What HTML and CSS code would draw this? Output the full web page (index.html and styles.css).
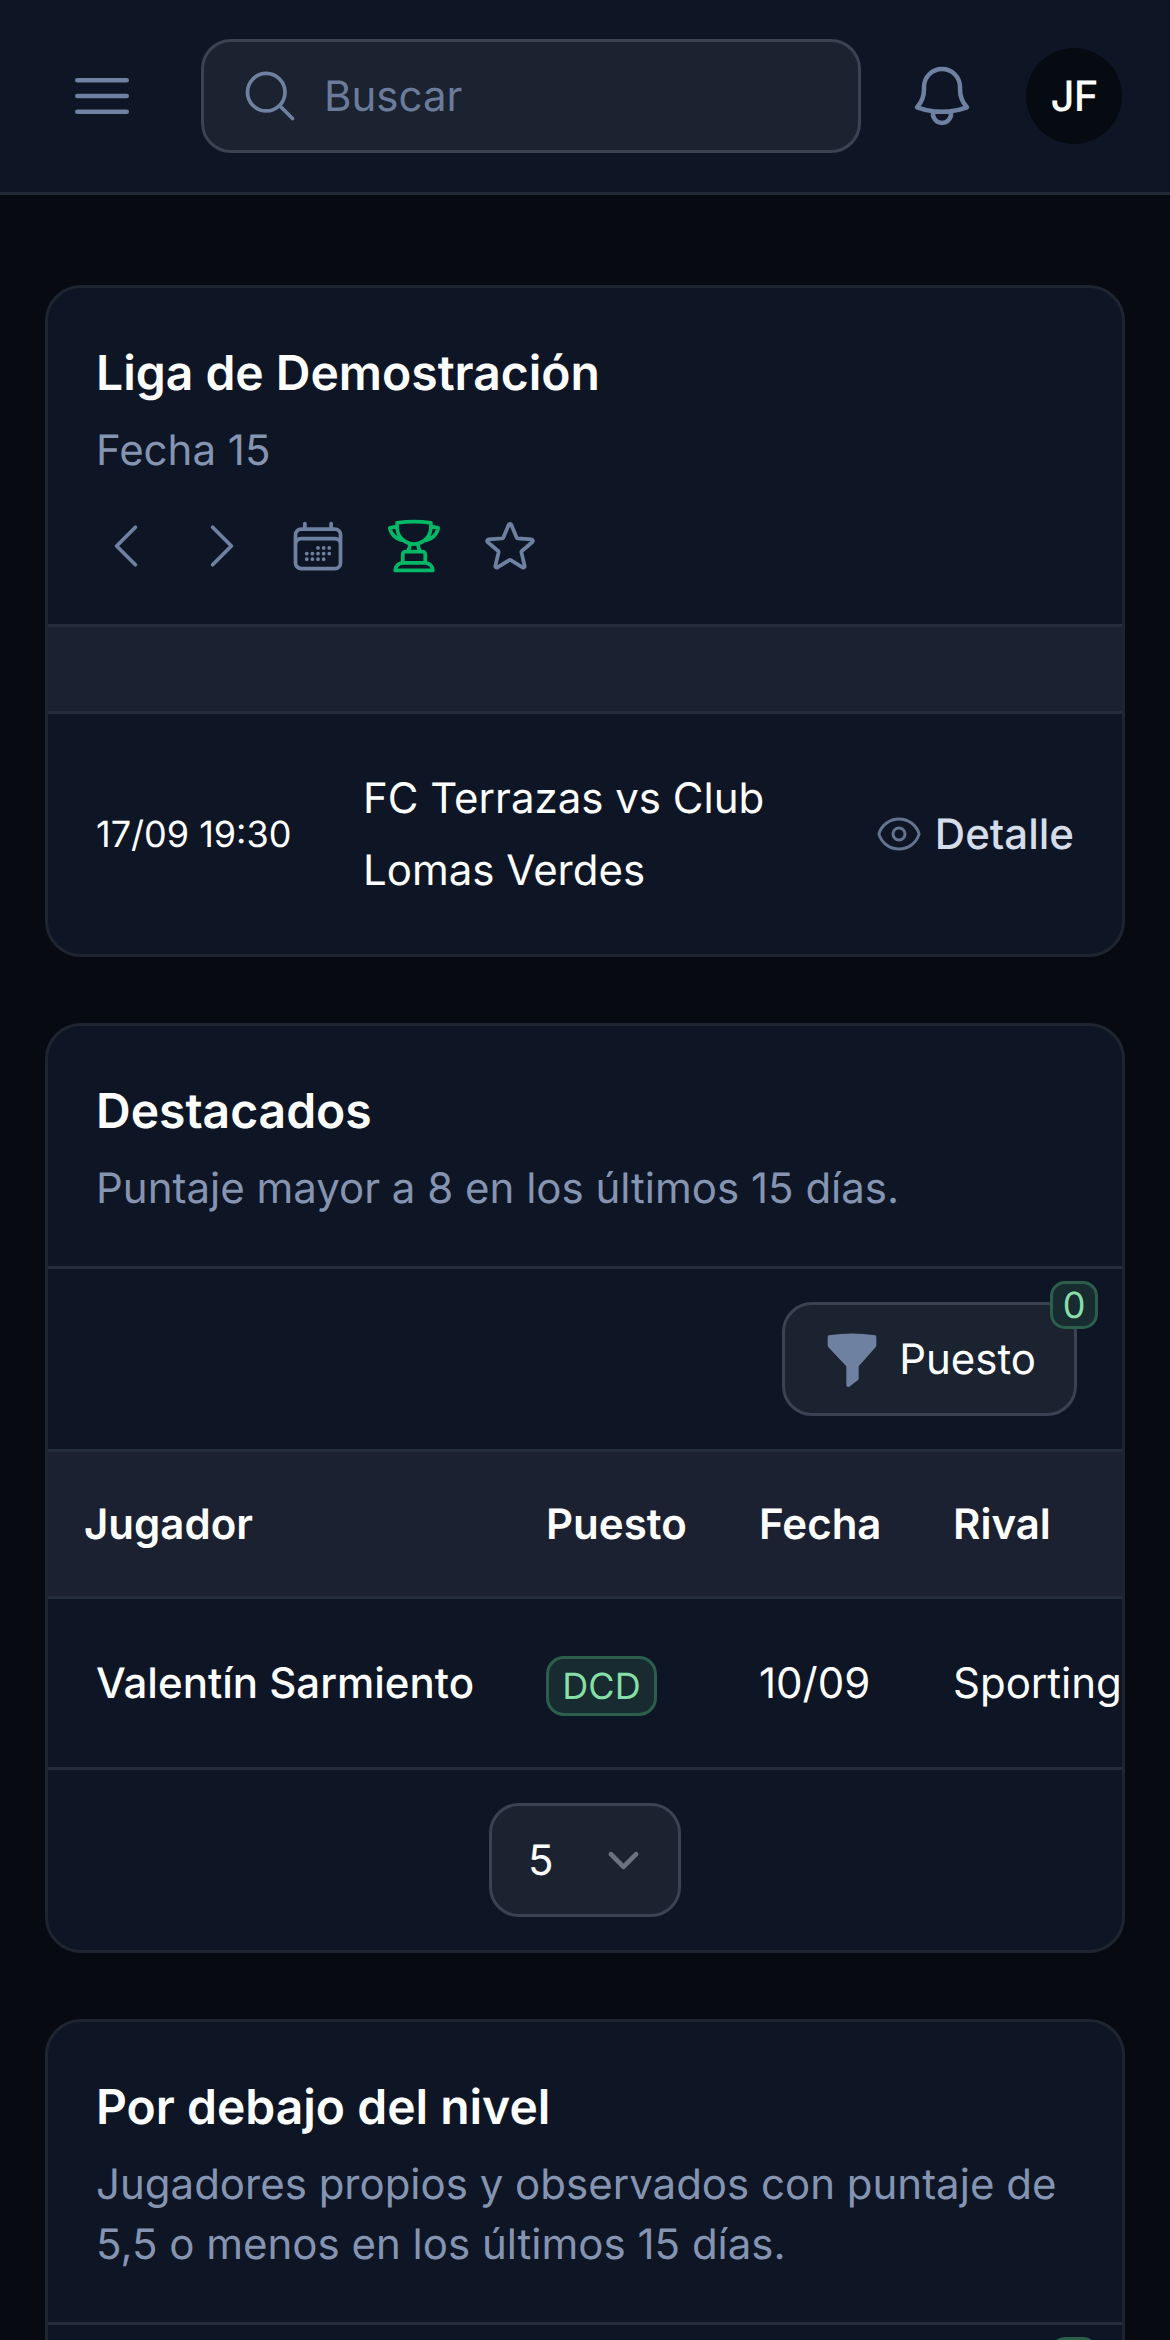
FILE: index.html
```html
<!DOCTYPE html>
<html lang="es">
<head>
<meta charset="utf-8">
<title>Liga de Demostración</title>
<link rel="stylesheet" href="styles.css">
</head>
<body>
<header class="topbar">
  <svg class="ico-menu" viewBox="0 0 24 24" fill="none" stroke="currentColor" stroke-width="1.5" stroke-linecap="round" stroke-linejoin="round"><path d="M3.75 6.75h16.5M3.75 12h16.5m-16.5 5.25h16.5"/></svg>
  <div class="search">
    <svg class="ico-60" viewBox="0 0 24 24" fill="none" stroke="currentColor" stroke-width="1.5" stroke-linecap="round" stroke-linejoin="round"><path d="m21 21-5.197-5.197m0 0A7.5 7.5 0 1 0 5.196 5.196a7.5 7.5 0 0 0 10.607 10.607Z"/></svg>
    <span class="search-text">Buscar</span>
  </div>
  <svg class="ico-bell" viewBox="0 0 24 24" fill="none" stroke="currentColor" stroke-width="1.5" stroke-linecap="round" stroke-linejoin="round"><path d="M14.857 17.082a23.848 23.848 0 0 0 5.454-1.31A8.967 8.967 0 0 1 18 9.75V9A6 6 0 0 0 6 9v.75a8.967 8.967 0 0 1-2.312 6.022c1.733.64 3.56 1.085 5.455 1.31m5.714 0a24.255 24.255 0 0 1-5.714 0m5.714 0a3 3 0 1 1-5.714 0"/></svg>
  <div class="avatar">JF</div>
</header>

<main class="content">
  <section class="card">
    <div class="card-head">
      <h2 class="title">Liga de Demostración</h2>
      <p class="sub">Fecha 15</p>
      <div class="tools">
        <svg class="ico-60" viewBox="0 0 24 24" fill="none" stroke="currentColor" stroke-width="1.5" stroke-linecap="round" stroke-linejoin="round"><path d="M15.75 19.5 8.25 12l7.5-7.5"/></svg>
        <svg class="ico-60" viewBox="0 0 24 24" fill="none" stroke="currentColor" stroke-width="1.5" stroke-linecap="round" stroke-linejoin="round"><path d="m8.25 4.5 7.5 7.5-7.5 7.5"/></svg>
        <svg class="ico-60" viewBox="0 0 24 24" fill="none" stroke="currentColor" stroke-width="1.5" stroke-linecap="round" stroke-linejoin="round"><path d="M6.75 3v2.25M17.25 3v2.25M3 18.75V7.5a2.25 2.25 0 0 1 2.25-2.25h13.5A2.25 2.25 0 0 1 21 7.5v11.25m-18 0A2.25 2.25 0 0 0 5.25 21h13.5A2.25 2.25 0 0 0 21 18.75m-18 0v-7.5A2.25 2.25 0 0 1 5.25 9h13.5A2.25 2.25 0 0 1 21 11.25v7.5m-9-6h.008v.008H12v-.008ZM12 15h.008v.008H12V15Zm0 2.25h.008v.008H12v-.008ZM9.75 15h.008v.008H9.75V15Zm0 2.25h.008v.008H9.75v-.008ZM7.5 15h.008v.008H7.5V15Zm0 2.25h.008v.008H7.5v-.008Zm6.75-4.5h.008v.008h-.008v-.008Zm0 2.25h.008v.008h-.008V15Zm0 2.25h.008v.008h-.008v-.008Zm2.25-4.5h.008v.008H16.5v-.008Zm0 2.25h.008v.008H16.5V15Z"/></svg>
        <svg class="ico-60 green" viewBox="0 0 24 24" fill="none" stroke="currentColor" stroke-width="1.5" stroke-linecap="round" stroke-linejoin="round"><path d="M16.5 18.75h-9m9 0a3 3 0 0 1 3 3h-15a3 3 0 0 1 3-3m9 0v-3.375c0-.621-.503-1.125-1.125-1.125h-.871M7.5 18.75v-3.375c0-.621.504-1.125 1.125-1.125h.872m5.007 0H9.497m5.007 0a7.454 7.454 0 0 1-.982-3.172M9.497 14.25a7.454 7.454 0 0 0 .981-3.172M5.25 4.236c-.982.143-1.954.317-2.916.52A6.003 6.003 0 0 0 7.73 9.728M5.25 4.236V4.5c0 2.108.966 3.99 2.48 5.228M5.25 4.236V2.721C7.456 2.41 9.71 2.25 12 2.25c2.291 0 4.545.16 6.75.47v1.516M7.73 9.728a6.726 6.726 0 0 0 2.748 1.35m8.272-6.842V4.5c0 2.108-.966 3.99-2.48 5.228m2.48-5.492a46.32 46.32 0 0 1 2.916.52 6.003 6.003 0 0 1-5.395 4.972m0 0a6.726 6.726 0 0 1-2.749 1.35m0 0a6.772 6.772 0 0 1-3.044 0"/></svg>
        <svg class="ico-60" viewBox="0 0 24 24" fill="none" stroke="currentColor" stroke-width="1.5" stroke-linecap="round" stroke-linejoin="round"><path d="M11.48 3.499a.562.562 0 0 1 1.04 0l2.125 5.111a.563.563 0 0 0 .475.345l5.518.442c.499.04.701.663.321.988l-4.204 3.602a.563.563 0 0 0-.182.557l1.285 5.385a.562.562 0 0 1-.84.61l-4.725-2.885a.562.562 0 0 0-.586 0L6.982 20.54a.562.562 0 0 1-.84-.61l1.285-5.386a.562.562 0 0 0-.182-.557l-4.204-3.602a.562.562 0 0 1 .321-.988l5.518-.442a.563.563 0 0 0 .475-.345L11.48 3.5Z"/></svg>
      </div>
    </div>
    <div class="band"></div>
    <div class="match">
      <span class="match-date">17/09 19:30</span>
      <span class="match-name">FC Terrazas vs Club Lomas Verdes</span>
      <span class="match-link">
        <svg class="ico-eye" viewBox="0 0 24 24" fill="none" stroke="currentColor" stroke-width="1.5" stroke-linecap="round" stroke-linejoin="round"><path d="M2.036 12.322a1.012 1.012 0 0 1 0-.639C3.423 7.51 7.36 4.5 12 4.5c4.638 0 8.573 3.007 9.963 7.178.07.207.07.431 0 .639C20.577 16.49 16.64 19.5 12 19.5c-4.638 0-8.573-3.007-9.963-7.178Z"/><path d="M15 12a3 3 0 1 1-6 0 3 3 0 0 1 6 0Z"/></svg>
        Detalle
      </span>
    </div>
  </section>

  <section class="card">
    <div class="card-head bordered">
      <h2 class="title">Destacados</h2>
      <p class="sub">Puntaje mayor a 8 en los últimos 15 días.</p>
    </div>
    <div class="filter-row">
      <div class="filter-btn">
        <svg class="ico-funnel" viewBox="0 0 150 170" fill="currentColor"><path d="M5 12Q75 2 145 12Q148 13 148 18V42Q148 46 145 49L95 105V142Q95 145 92 147L67 167Q58 170 58 160V105L5 49Q2 46 2 42V18Q2 13 5 12Z"/></svg>
        <span class="filter-label">Puesto</span>
        <span class="count">0</span>
      </div>
    </div>
    <div class="table-wrap">
      <table class="table">
        <colgroup><col class="c1"><col class="c2"><col class="c3"><col class="c4"></colgroup>
        <thead>
          <tr><th>Jugador</th><th>Puesto</th><th>Fecha</th><th>Rival</th></tr>
        </thead>
        <tbody>
          <tr><td class="player">Valentín Sarmiento</td><td><span class="tag">DCD</span></td><td>10/09</td><td>Sporting</td></tr>
        </tbody>
      </table>
    </div>
    <div class="pager">
      <div class="select">
        <span>5</span>
        <svg class="ico-sel" viewBox="0 0 20 20" fill="none" stroke="currentColor" stroke-width="1.5" stroke-linecap="round" stroke-linejoin="round"><path d="m6 8 4 4 4-4"/></svg>
      </div>
    </div>
  </section>

  <section class="card">
    <div class="card-head bordered">
      <h2 class="title">Por debajo del nivel</h2>
      <p class="sub">Jugadores propios y observados con puntaje de 5,5 o menos en los últimos 15 días.</p>
    </div>
    <div class="filter-row">
      <div class="filter-btn">
        <svg class="ico-funnel" viewBox="0 0 150 170" fill="currentColor"><path d="M5 12Q75 2 145 12Q148 13 148 18V42Q148 46 145 49L95 105V142Q95 145 92 147L67 167Q58 170 58 160V105L5 49Q2 46 2 42V18Q2 13 5 12Z"/></svg>
        <span class="filter-label">Puesto</span>
        <span class="count">0</span>
      </div>
    </div>
  </section>
</main>
</body>
</html>
```
FILE: styles.css
```css
* { box-sizing: border-box; }
html, body { margin: 0; padding: 0; }
body {
  width: 1170px;
  height: 2340px;
  overflow: hidden;
  background: #070a11;
  color: #fff;
  font-family: Inter, "Liberation Sans", sans-serif;
  font-size: 42px;
  text-rendering: geometricPrecision;
}

.topbar {
  display: flex;
  align-items: center;
  height: 195px;
  padding: 0 48px 0 66px;
  background: #0e1626;
  border-bottom: 3px solid #232936;
}
.ico-menu, .ico-bell { width: 72px; height: 72px; flex: none; color: #6f81a0; }
.ico-60 { width: 60px; height: 60px; flex: none; color: #6f81a0; display: block; }
.ico-60.green { color: #00b865; }
.ico-eye { width: 48px; height: 48px; flex: none; color: #64748f; }
.ico-sel { width: 63px; height: 63px; flex: none; color: #6b7280; }
.ico-funnel { width: 50px; height: 57px; flex: none; color: #6f81a0; }

.search {
  display: flex;
  align-items: center;
  gap: 24px;
  width: 661px;
  height: 114px;
  margin-left: 63px;
  padding: 0 36px;
  background: #1b2230;
  border: 3px solid #3b4252;
  border-radius: 30px;
}
.search-text { color: #6b7b9a; font-size: 42px; }
.ico-bell { margin-left: 45px; }
.avatar {
  display: flex;
  align-items: center;
  justify-content: center;
  width: 96px;
  height: 96px;
  margin-left: 48px;
  border-radius: 50%;
  background: #060b12;
  font-size: 42px;
  font-weight: 500;
  letter-spacing: -1px;
}

.content {
  display: flex;
  flex-direction: column;
  gap: 66px;
  padding: 90px 45px 0;
}
.card {
  background: #0e1626;
  border: 3px solid #1f2530;
  border-radius: 36px;
  overflow: hidden;
}
.card-head { padding: 49px 48px 48px; }
.card-head.bordered { padding-bottom: 47px; border-bottom: 3px solid #252c3a; }
.title { margin: 0; font-size: 48px; line-height: 72px; font-weight: 600; }
.sub { margin: 12px 0 0; font-size: 42px; line-height: 60px; color: #8594b1; }
.tools { display: flex; gap: 36px; margin-top: 35px; }

.band {
  height: 90px;
  background: #1b2130;
  border-top: 3px solid #252c3a;
  border-bottom: 3px solid #252c3a;
}
.match {
  display: flex;
  align-items: center;
  padding: 48px;
}
.match-date { width: 267px; flex: none; font-size: 36px; line-height: 54px; }
.match-name { flex: 1; padding-top: 1px; font-size: 42px; line-height: 72px; margin-bottom: -1px; }
.match-link {
  display: flex;
  align-items: center;
  gap: 12px;
  flex: none;
  font-size: 42px;
  font-weight: 500;
  color: #d6ddea;
}

.filter-row {
  display: flex;
  justify-content: flex-end;
  padding: 33px 45px;
  border-bottom: 3px solid #252c3a;
}
.filter-btn {
  position: relative;
  display: flex;
  align-items: center;
  gap: 22px;
  height: 114px;
  padding: 0 38px 0 42px;
  background: #1b2230;
  border: 3px solid #3b4252;
  border-radius: 30px;
}
.filter-label { font-size: 42px; }
.count {
  position: absolute;
  top: -24px;
  right: -24px;
  display: flex;
  align-items: center;
  justify-content: center;
  width: 48px;
  height: 48px;
  border: 3px solid #2b5f4c;
  border-radius: 15px;
  background: #182b30;
  color: #86dfa6;
  font-size: 36px;
}

.table-wrap { overflow: hidden; }
.table {
  width: 1155px;
  table-layout: fixed;
  border-collapse: separate;
  border-spacing: 0;
}
.c1 { width: 498px; }
.c2 { width: 213px; }
.c3 { width: 194px; }
.c4 { width: 250px; }
.table th {
  height: 147px;
  padding: 0;
  background: #1b2130;
  border-bottom: 3px solid #252c3a;
  font-size: 42px;
  font-weight: 600;
  text-align: left;
}
.table td {
  height: 171px;
  padding: 0;
  border-bottom: 3px solid #252c3a;
  font-size: 42px;
  white-space: nowrap;
}
.table th:first-child { padding-left: 36px; }
.table td.player { padding-left: 48px; font-weight: 500; }
.tag {
  display: inline-flex;
  align-items: center;
  justify-content: center;
  width: 111px;
  height: 60px;
  margin-top: 6px;
  border: 3px solid #2b5f4c;
  border-radius: 18px;
  background: #182b30;
  color: #86dfa6;
  font-size: 36px;
  vertical-align: middle;
}

.pager { display: flex; justify-content: center; padding: 33px 0; }
.select {
  display: flex;
  align-items: center;
  justify-content: space-between;
  width: 192px;
  height: 114px;
  padding: 0 23px 0 36px;
  background: #1b2230;
  border: 3px solid #3b4252;
  border-radius: 30px;
}
```
